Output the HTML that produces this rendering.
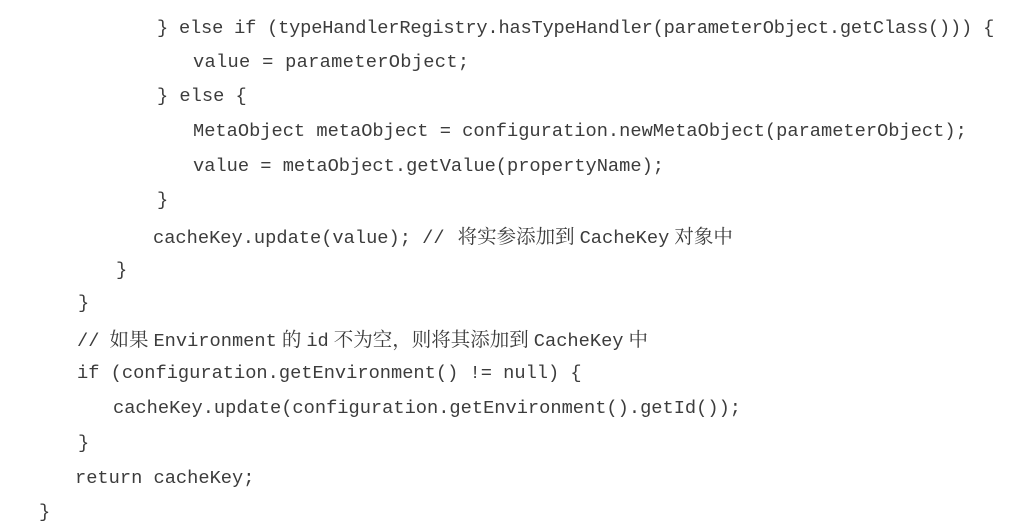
<!DOCTYPE html>
<html><head><meta charset="utf-8"><style>
html,body{margin:0;padding:0;background:#fff;}
body{width:1013px;height:518px;position:relative;overflow:hidden;}
.l{position:absolute;white-space:pre;font-family:"Liberation Mono","Noto Serif CJK SC",monospace;font-size:18.7px;color:#3c3c3c;line-height:24px;}
.c{font-family:"Noto Serif CJK SC",serif;font-size:19.5px;margin:0 5px;}
</style></head><body>
<div class="l" style="left:157px;top:16px;letter-spacing:-0.2px">} else if (typeHandlerRegistry.hasTypeHandler(parameterObject.getClass())) {</div>
<div class="l" style="left:193px;top:50px;letter-spacing:0.3px">value = parameterObject;</div>
<div class="l" style="left:157px;top:84px">} else {</div>
<div class="l" style="left:193px;top:119px">MetaObject metaObject = configuration.newMetaObject(parameterObject);</div>
<div class="l" style="left:193px;top:154px">value = metaObject.getValue(propertyName);</div>
<div class="l" style="left:157px;top:188px">}</div>
<div class="l" style="left:153px;top:223px">cacheKey.update(value); //<span class="c" style="margin-left:13px">将实参添加到</span>CacheKey<span class="c">对象中</span></div>
<div class="l" style="left:116px;top:258px">}</div>
<div class="l" style="left:78px;top:291px">}</div>
<div class="l" style="left:77px;top:326px">//<span class="c" style="margin-left:10px">如果</span>Environment<span class="c">的</span>id<span class="c">不为空，则将其添加到</span>CacheKey<span class="c">中</span></div>
<div class="l" style="left:77px;top:361px">if (configuration.getEnvironment() != null) {</div>
<div class="l" style="left:113px;top:396px">cacheKey.update(configuration.getEnvironment().getId());</div>
<div class="l" style="left:78px;top:431px">}</div>
<div class="l" style="left:75px;top:466px">return cacheKey;</div>
<div class="l" style="left:39px;top:500px">}</div>
</body></html>
